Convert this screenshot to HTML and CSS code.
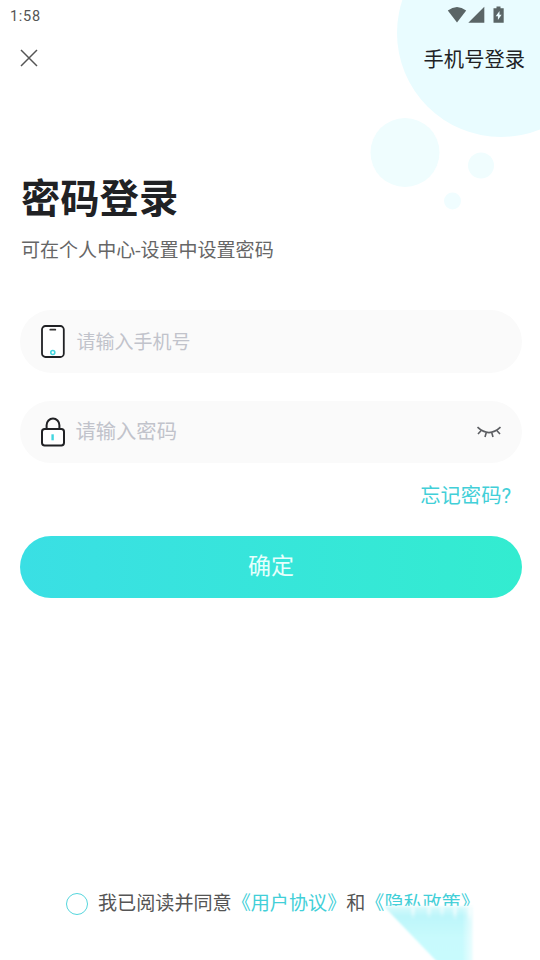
FILE: index.html
```html
<!DOCTYPE html>
<html lang="zh-CN">
<head>
<meta charset="utf-8">
<title>密码登录</title>
<link rel="stylesheet" href="styles.css">
</head>
<body>
<main class="screen">
  <svg class="bubbles" width="180" height="220" viewBox="0 0 180 220" aria-hidden="true">
    <circle cx="141" cy="33" r="104" fill="#e9fcff"/>
    <circle cx="45" cy="152.500" r="34.500" fill="#effdfe"/>
    <circle cx="121" cy="165.500" r="13" fill="#f0fdfe"/>
    <circle cx="92.500" cy="201" r="8.500" fill="#f0fdff"/>
  </svg>

  <div class="status">
    <span class="clock">1:58</span>
    <svg width="58" height="18" viewBox="0 0 58 18" fill="#5a6566" aria-hidden="true">
      <path d="M.8 4.500Q10 -2.500 19.200 4.500L10 16.500Z"/>
      <path d="M37.300 .8V16.800H21.300Z"/>
      <path d="M49.500 .5h4v1.700h3.200v14.600H46.500V2.200h3Z"/>
      <path d="M52.500 5L48.700 10.200h2.200V14l3.700-5.200h-2.100Z" fill="#eafcff"/>
    </svg>
  </div>

  <header class="nav">
    <svg width="18" height="18" viewBox="0 0 18 18" aria-hidden="true"><path d="M1 1L17 17M17 1L1 17" stroke="#555" stroke-width="1.500" fill="none"/></svg>
    <span class="phone-login">手机号登录</span>
  </header>

  <h1>密码登录</h1>
  <p class="hint">可在个人中心-设置中设置密码</p>

  <div class="field field-phone">
    <svg width="24" height="34" viewBox="0 0 24 34" fill="none" aria-hidden="true">
      <rect x="1" y="1" width="21.800" height="31" rx="3.500" fill="#fff" stroke="#202124" stroke-width="1.800"/>
      <path d="M9.300 4.700h5" stroke="#333" stroke-width="1.800" stroke-linecap="round"/>
      <circle cx="11.800" cy="27.500" r="2" stroke="#42d6df" stroke-width="1.600"/>
    </svg>
    <span class="placeholder">请输入手机号</span>
  </div>

  <div class="field field-password">
    <svg width="24" height="30" viewBox="0 0 24 30" fill="none" aria-hidden="true">
      <path d="M5.600 12V8.300a6.200 6.500 0 0 1 12.800 0V12" stroke="#202124" stroke-width="2"/>
      <rect x="1" y="12" width="22" height="16.500" rx="2.700" fill="#fff" stroke="#202124" stroke-width="2"/>
      <path d="M11.600 17.300v6" stroke="#42d6df" stroke-width="2.400"/>
    </svg>
    <span class="placeholder">请输入密码</span>
    <svg class="eye" width="26" height="14" viewBox="0 0 26 14" fill="none" stroke="#5b5d61" stroke-width="1.600" aria-hidden="true">
      <path d="M1.500 2.200Q13 13 24.500 2.200M5 5.700L2 9M10.200 7.700L9 12M15.800 7.700L17 12M21 5.700L24 9"/>
    </svg>
  </div>

  <div class="forgot">忘记密码?</div>
  <div class="submit">确定</div>

  <footer class="agreement">
    <span class="radio"></span>
    <span>我已阅读并同意<span class="link">《用户协议》</span>和<span class="link">《隐私政策》</span></span>
  </footer>

  <svg class="beam" width="110" height="60" viewBox="0 0 110 60" aria-hidden="true">
    <defs>
      <linearGradient id="fade" x1="0" x2="0" y1="0" y2="1">
        <stop offset="0" stop-color="#d9fafc"/>
        <stop offset=".15" stop-color="#bdf6fa"/>
        <stop offset=".5" stop-color="#c8fafd"/>
        <stop offset="1" stop-color="#c8fbfe"/>
      </linearGradient>
      <linearGradient id="edge" x1="0" x2="1" y1="0" y2="0">
        <stop offset="0" stop-color="#fff" stop-opacity="0"/>
        <stop offset="1" stop-color="#fff"/>
      </linearGradient>
      <filter id="soft" x="-10%" y="-10%" width="120%" height="120%"><feGaussianBlur stdDeviation="1"/></filter>
      <filter id="streak" filterUnits="userSpaceOnUse" x="0" y="0" width="110" height="60"><feGaussianBlur stdDeviation="1.500 3"/></filter>
    </defs>
    <path d="M12 6H110V60H12Z" fill="#fff"/>
    <path d="M12 6.500H101V70H73Z" fill="url(#fade)" filter="url(#soft)"/>
    <path d="M41 6V15M57 6V14M70 6V13M83 6V16M98 6V18" stroke="#fff" stroke-width="3" opacity=".8" filter="url(#streak)"/>
    <rect x="90" y="6" width="16" height="54" fill="url(#edge)"/>
    <rect x="106" y="6" width="4" height="54" fill="#fff"/>
  </svg>
</main>
</body>
</html>
```

FILE: styles.css
```css
* { box-sizing: border-box; }

body {
  margin: 0;
  background: #fff;
  color: #202124;
  font-family: Roboto, "Noto Sans CJK SC", sans-serif;
}

.screen {
  position: relative;
  width: 540px;
  height: 960px;
  padding: 0 18px 0 20px;
  overflow: hidden;
  display: flex;
  flex-direction: column;
}

.screen > * { flex-shrink: 0; }

.bubbles {
  position: absolute;
  top: 0;
  right: 0;
  z-index: -1;
}

.status {
  height: 32px;
  margin: 0 17px 0 -10px;
  padding-top: 6px;
  display: flex;
  justify-content: space-between;
  align-items: flex-start;
}

.clock {
  font-size: 14.500px;
  font-weight: 400;
  line-height: 21px;
  letter-spacing: .7px;
  color: #555;
}

.nav {
  height: 52px;
  margin-right: -3px;
  display: flex;
  align-items: center;
  justify-content: space-between;
}

.phone-login {
  padding-top: 3px;
  font-size: 20.300px;
  line-height: 30px;
}

h1 {
  margin: 86px 0 0 1px;
  font-size: 39.300px;
  font-weight: 700;
  line-height: 60px;
}

.hint {
  margin: 7px 0 0 1px;
  font-size: 19.050px;
  line-height: 28px;
  color: #666;
}

.field {
  display: flex;
  align-items: center;
  padding: 0 20px 0 20.500px;
  border-radius: 32px;
  background: #fafafa;
  color: #c1c3cb;
}

.field-phone {
  height: 63px;
  margin-top: 45px;
  font-size: 19px;
  gap: 12px;
}

.field-password {
  height: 62px;
  margin-top: 28px;
  font-size: 20.300px;
  gap: 11px;
}

.eye { margin-left: auto; }

.placeholder { margin-bottom: 2px; }

.field-password .placeholder { margin-bottom: 5px; }

.forgot {
  margin: 18px 11px 0 0;
  text-align: right;
  font-size: 20.300px;
  line-height: 30px;
  color: #42cfd8;
}

.submit {
  height: 62px;
  margin-top: 25px;
  border-radius: 31px;
  background: linear-gradient(90deg, #3adfe4, #33ecd0);
  color: #e6fffc;
  font-size: 23px;
  line-height: 62px;
  text-align: center;
}

.agreement {
  margin: auto 0 41px 46px;
  display: flex;
  align-items: center;
  gap: 10px;
  font-size: 19.100px;
  line-height: 30px;
  color: #555;
  white-space: nowrap;
}

.radio {
  width: 22px;
  height: 22px;
  border: 1px solid #55d6dd;
  border-radius: 50%;
}

.link { color: #42cfd8; }

.beam {
  position: absolute;
  left: 372px;
  top: 900px;
}
```
